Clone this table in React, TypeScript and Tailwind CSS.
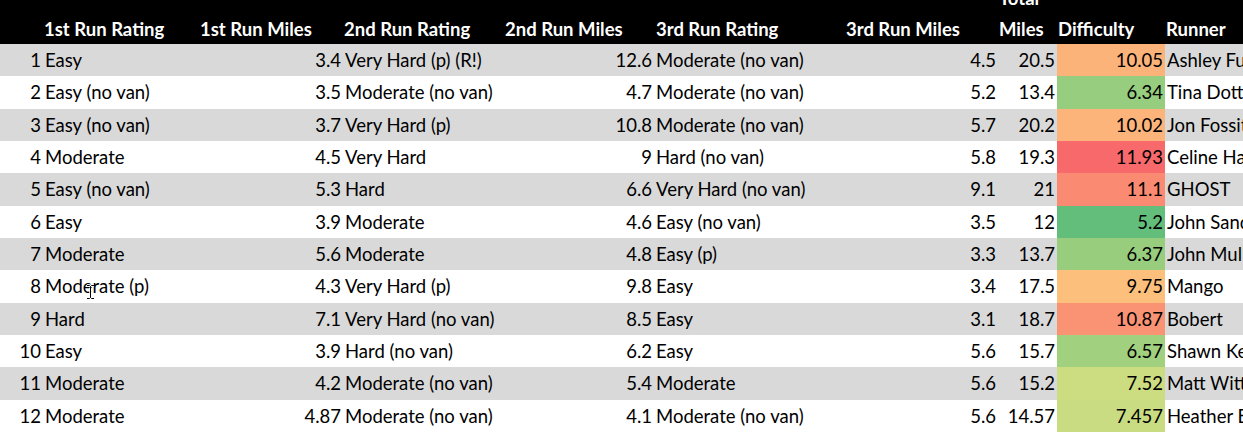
const cols = "grid grid-cols-[43px_156px_144px_161px_150px_191px_153px_59px_108px_1fr]"

type Row = {
  n: number
  r1: string
  m1: string
  r2: string
  m2: string
  r3: string
  m3: string
  total: string
  diff: string
  diffBg: string
  runner: string
}

const rows: Row[] = [
  { n: 1, r1: "Easy", m1: "3.4", r2: "Very Hard (p) (R!)", m2: "12.6", r3: "Moderate (no van)", m3: "4.5", total: "20.5", diff: "10.05", diffBg: "bg-[#fcb37a]", runner: "Ashley Fu" },
  { n: 2, r1: "Easy (no van)", m1: "3.5", r2: "Moderate (no van)", m2: "4.7", r3: "Moderate (no van)", m3: "5.2", total: "13.4", diff: "6.34", diffBg: "bg-[#97cd7e]", runner: "Tina Dotto" },
  { n: 3, r1: "Easy (no van)", m1: "3.7", r2: "Very Hard (p)", m2: "10.8", r3: "Moderate (no van)", m3: "5.7", total: "20.2", diff: "10.02", diffBg: "bg-[#fcb47a]", runner: "Jon Fossit" },
  { n: 4, r1: "Moderate", m1: "4.5", r2: "Very Hard", m2: "9", r3: "Hard (no van)", m3: "5.8", total: "19.3", diff: "11.93", diffBg: "bg-[#f8696b]", runner: "Celine Ha" },
  { n: 5, r1: "Easy (no van)", m1: "5.3", r2: "Hard", m2: "6.6", r3: "Very Hard (no van)", m3: "9.1", total: "21", diff: "11.1", diffBg: "bg-[#fa8a71]", runner: "GHOST" },
  { n: 6, r1: "Easy", m1: "3.9", r2: "Moderate", m2: "4.6", r3: "Easy (no van)", m3: "3.5", total: "12", diff: "5.2", diffBg: "bg-[#63be7b]", runner: "John Sand" },
  { n: 7, r1: "Moderate", m1: "5.6", r2: "Moderate", m2: "4.8", r3: "Easy (p)", m3: "3.3", total: "13.7", diff: "6.37", diffBg: "bg-[#98cd7e]", runner: "John Mull" },
  { n: 8, r1: "Moderate (p)", m1: "4.3", r2: "Very Hard (p)", m2: "9.8", r3: "Easy", m3: "3.4", total: "17.5", diff: "9.75", diffBg: "bg-[#fdbf7c]", runner: "Mango" },
  { n: 9, r1: "Hard", m1: "7.1", r2: "Very Hard (no van)", m2: "8.5", r3: "Easy", m3: "3.1", total: "18.7", diff: "10.87", diffBg: "bg-[#fa9373]", runner: "Bobert" },
  { n: 10, r1: "Easy", m1: "3.9", r2: "Hard (no van)", m2: "6.2", r3: "Easy", m3: "5.6", total: "15.7", diff: "6.57", diffBg: "bg-[#a1d07f]", runner: "Shawn Ke" },
  { n: 11, r1: "Moderate", m1: "4.2", r2: "Moderate (no van)", m2: "5.4", r3: "Moderate", m3: "5.6", total: "15.2", diff: "7.52", diffBg: "bg-[#ccdc81]", runner: "Matt Witt" },
  { n: 12, r1: "Moderate", m1: "4.87", r2: "Moderate (no van)", m2: "4.1", r3: "Moderate (no van)", m3: "5.6", total: "14.57", diff: "7.457", diffBg: "bg-[#cadc81]", runner: "Heather E" },
]

function Num({ children, className = "" }: { children: React.ReactNode; className?: string }) {
  return <div className={`px-[2px] text-right whitespace-nowrap overflow-hidden ${className}`}>{children}</div>
}

function Txt({ children }: { children: React.ReactNode }) {
  return <div className="px-[2px] whitespace-nowrap overflow-hidden">{children}</div>
}

function IBeam() {
  return (
    <svg className="absolute left-[86px] top-[284px]" width="9" height="16" viewBox="0 0 9 16">
      <path d="M1 1.5h2.5l1 1 1-1H8M4.5 2.5v11M1 14.5h2.5l1-1 1 1H8" fill="none" stroke="#fff" strokeWidth="2.5" />
      <path d="M1 1.5h2.5l1 1 1-1H8M4.5 2.5v11M1 14.5h2.5l1-1 1 1H8" fill="none" stroke="#000" strokeWidth="1" />
    </svg>
  )
}

export default function App() {
  return (
    <div className="relative w-[1243px] h-[432px] overflow-hidden bg-white text-black font-['Lato',sans-serif] text-[18.5px]">
      <div className="h-[44px] bg-black overflow-hidden">
        <div className={`${cols} grid-rows-[41px] text-white font-bold leading-[24px] items-end`}>
          <div />
          <div className="px-[1px] whitespace-nowrap">1st Run Rating</div>
          <div className="px-[1px] whitespace-nowrap">1st Run Miles</div>
          <div className="px-[1px] whitespace-nowrap">2nd Run Rating</div>
          <div className="px-[1px] whitespace-nowrap">2nd Run Miles</div>
          <div className="px-[2px] whitespace-nowrap">3rd Run Rating</div>
          <div className="px-[1px] whitespace-nowrap">3rd Run Miles</div>
          <div className="px-[1px] h-full flex flex-col justify-end">
            <span className="mb-[7px]">Total</span>
            <span>Miles</span>
          </div>
          <div className="px-[1px] whitespace-nowrap">Difficulty</div>
          <div className="px-[1px] whitespace-nowrap">Runner</div>
        </div>
      </div>
      {rows.map((r, i) => (
        <div
          key={r.n}
          className={`${cols} h-[32.33px] leading-[32.33px] ${i % 2 === 0 ? "bg-[#d9d9d9]" : "bg-white"}`}
        >
          <Num>{r.n}</Num>
          <Txt>{r.r1}</Txt>
          <Num>{r.m1}</Num>
          <Txt>{r.r2}</Txt>
          <Num>{r.m2}</Num>
          <Txt>{r.r3}</Txt>
          <Num>{r.m3}</Num>
          <Num>{r.total}</Num>
          <Num className={r.diffBg}>{r.diff}</Num>
          <Txt>{r.runner}</Txt>
        </div>
      ))}
      <IBeam />
    </div>
  )
}
